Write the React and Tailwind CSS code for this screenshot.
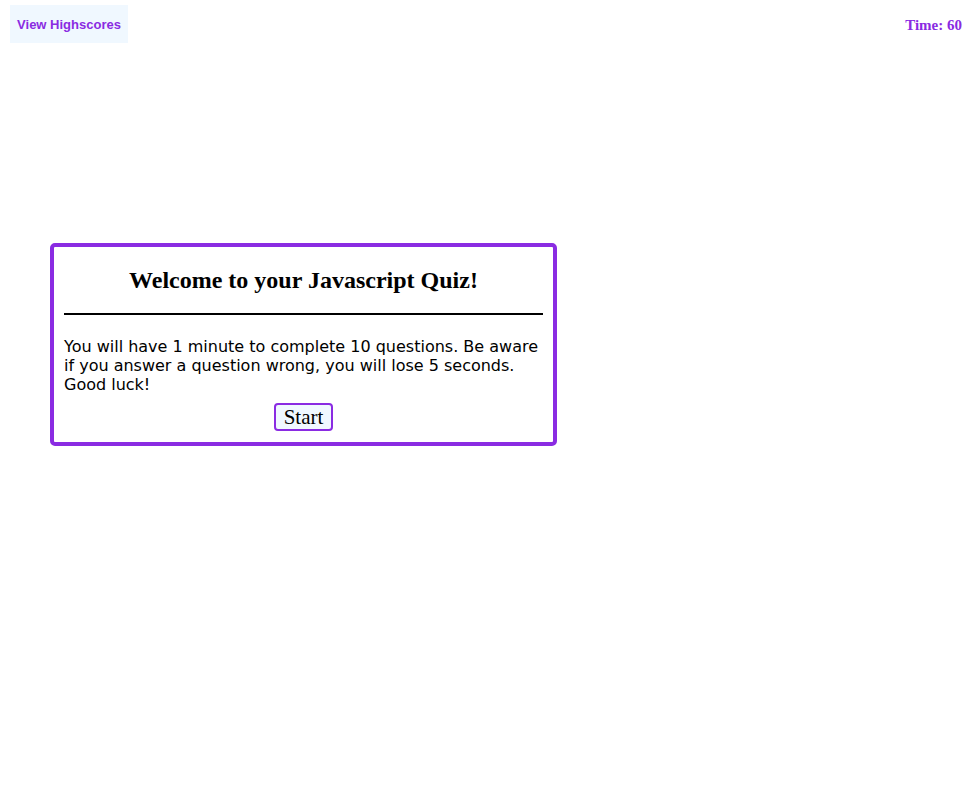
export default function App() {
  return (
    <div className="min-h-screen bg-white">
      {/* Header */}
      <header className="flex items-start justify-between pl-[10px] pr-[12px] pt-[5px]">
        <button className="h-[38px] w-[118px] bg-[#f0f8ff] text-[#8a2be2] font-bold text-[13px] leading-[16px] pt-[2px] font-['Liberation_Sans',Arial,sans-serif]">
          View Highscores
        </button>
        <div className="pt-[12px] text-[#8a2be2] font-bold text-[15px] leading-[16px] font-['Liberation_Serif','Times_New_Roman',serif]">
          Time: 60
        </div>
      </header>

      {/* Quiz card */}
      <main className="pt-[200px] pl-[50px]">
        <div className="w-[507px] border-4 border-[#8a2be2] rounded-[5px] px-[10px] pb-[11px]">
          <h1 className="mt-[19px] mb-[19px] text-center text-[24px] leading-[28px] font-bold text-black font-['Liberation_Serif','Times_New_Roman',serif]">
            Welcome to your Javascript Quiz!
          </h1>
          <hr className="border-t-2 border-black" />
          <p className="mt-[22px] text-[16px] leading-[19px] text-black font-['DejaVu_Sans',Verdana,sans-serif]">
            You will have 1 minute to complete 10 questions. Be aware if you answer a question wrong, you will lose 5 seconds. Good luck!
          </p>
          <div className="flex justify-center mt-[9px]">
            <button className="h-[28px] px-[8px] border-2 border-[#8a2be2] rounded-[4px] bg-[#f0f8ff] text-[21px] leading-[22px] text-black font-['Liberation_Serif','Times_New_Roman',serif]">
              Start
            </button>
          </div>
        </div>
      </main>
    </div>
  );
}
